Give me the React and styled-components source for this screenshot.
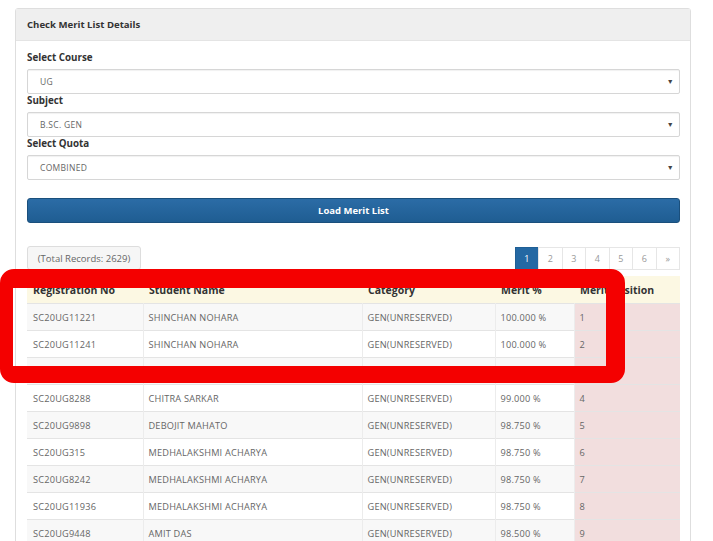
import React from 'react';
import styled, { createGlobalStyle } from 'styled-components';

const GlobalStyle = createGlobalStyle`
  html, body {
    margin: 0;
    padding: 0;
    background: #ffffff;
    overflow: hidden;
  }
  body {
    font-family: "Open Sans", "Noto Sans", sans-serif;
    color: #333;
  }
`;

const Page = styled.div`
  position: relative;
  height: 541px;
  overflow: hidden;
  padding: 8px 22px 0 15px;
`;

const Panel = styled.div`
  border: 1px solid #dedede;
  border-radius: 3px;
  background: #fff;
`;

const PanelHeading = styled.div`
  height: 31px;
  display: flex;
  align-items: center;
  padding: 0 11px;
  background: #efefef;
  border-bottom: 1px solid #e4e4e4;
  font-size: 9.6px;
  font-weight: 700;
  color: #333;
`;

const PanelBody = styled.div`
  padding: 10px 10px 0 11px;
`;

const Label = styled.div`
  font-size: 9.8px;
  font-weight: 700;
  line-height: 14px;
  margin-bottom: 4px;
  color: #333;
`;

const Select = styled.div`
  height: 25px;
  box-sizing: border-box;
  border: 1px solid #d6d6d6;
  border-radius: 2px;
  box-shadow: inset 0 1px 1px rgba(0, 0, 0, 0.06);
  display: flex;
  align-items: center;
  justify-content: space-between;
  padding: 0 5px 0 12px;
  font-size: 8.5px;
  letter-spacing: 0.3px;
  color: #666;
  text-transform: uppercase;
`;

const Caret = styled.span`
  font-size: 7px;
  color: #444;
`;

const LoadButton = styled.button`
  display: block;
  width: 100%;
  height: 25px;
  margin-top: 18px;
  border: 1px solid #1a4f7c;
  border-radius: 3px;
  background: linear-gradient(#2b6ca6, #1f5d92);
  color: #fff;
  font-family: inherit;
  font-size: 9.5px;
  font-weight: 700;
`;

const Toolbar = styled.div`
  margin-top: 23px;
  display: flex;
  justify-content: space-between;
  align-items: center;
`;

const TotalBox = styled.div`
  height: 24px;
  width: 114px;
  box-sizing: border-box;
  border: 1px solid #ddd;
  border-radius: 3px;
  background: #f6f6f6;
  display: flex;
  align-items: center;
  justify-content: center;
  font-size: 9.5px;
  color: #666;
`;

const Pager = styled.div`
  display: flex;
`;

const PageItem = styled.div`
  width: 24.5px;
  height: 23px;
  box-sizing: border-box;
  border: 1px solid ${({ $active }) => ($active ? '#1f5f95' : '#e6e6e6')};
  margin-left: -1px;
  background: ${({ $active }) => ($active ? '#2468a3' : '#fff')};
  color: ${({ $active }) => ($active ? '#fff' : '#999')};
  display: flex;
  align-items: center;
  justify-content: center;
  font-size: 9px;
`;

const Table = styled.table`
  margin-top: 6px;
  width: 653px;
  table-layout: fixed;
  border-collapse: collapse;
  font-size: 9.2px;
`;

const HeadCell = styled.th`
  height: 27px;
  padding: 0 6px;
  text-align: left;
  background: #fcf8e3;
  font-size: 10.5px;
  font-weight: 700;
  color: #333;
`;

const Row = styled.tr`
  background: ${({ $striped }) => ($striped ? '#f8f8f8' : '#fff')};
  border-top: 1px solid #e4e4e4;
`;

const Cell = styled.td`
  height: 26px;
  padding: 0 6px 0 5px;
  color: #666;
  text-transform: uppercase;
  letter-spacing: 0.2px;
  border-left: 1px solid #ececec;
  background: ${({ $danger }) => ($danger ? '#f2dede' : 'transparent')};
  &:first-child { border-left: none; padding-left: 6px; }
`;

const Marker = styled.div`
  position: absolute;
  left: 0;
  top: 269px;
  width: 625px;
  height: 114px;
  box-sizing: border-box;
  border-style: solid;
  border-color: #f40000;
  border-width: 19px 19px 17px 13px;
  border-radius: 14px;
  pointer-events: none;
`;

const rows = [
  ['SC20UG11221', 'SHINCHAN NOHARA', 'GEN(UNRESERVED)', '100.000 %', '1'],
  ['SC20UG11241', 'SHINCHAN NOHARA', 'GEN(UNRESERVED)', '100.000 %', '2'],
  ['SC20UG10562', 'PRIYANKA DAS', 'GEN(UNRESERVED)', '99.250 %', '3'],
  ['SC20UG8288', 'CHITRA SARKAR', 'GEN(UNRESERVED)', '99.000 %', '4'],
  ['SC20UG9898', 'DEBOJIT MAHATO', 'GEN(UNRESERVED)', '98.750 %', '5'],
  ['SC20UG315', 'MEDHALAKSHMI ACHARYA', 'GEN(UNRESERVED)', '98.750 %', '6'],
  ['SC20UG8242', 'MEDHALAKSHMI ACHARYA', 'GEN(UNRESERVED)', '98.750 %', '7'],
  ['SC20UG11936', 'MEDHALAKSHMI ACHARYA', 'GEN(UNRESERVED)', '98.750 %', '8'],
  ['SC20UG9448', 'AMIT DAS', 'GEN(UNRESERVED)', '98.500 %', '9'],
];

const selects = [
  ['Select Course', 'UG'],
  ['Subject', 'B.SC. GEN'],
  ['Select Quota', 'COMBINED'],
];

const App = () => {
  return (
    <Page>
      <GlobalStyle />
      <Panel>
        <PanelHeading>Check Merit List Details</PanelHeading>
        <PanelBody>
          {selects.map(([label, value]) => (
            <div key={label}>
              <Label>{label}</Label>
              <Select>
                {value}
                <Caret>▼</Caret>
              </Select>
            </div>
          ))}
          <LoadButton>Load Merit List</LoadButton>

          <Toolbar>
            <TotalBox>(Total Records: 2629)</TotalBox>
            <Pager>
              {['1', '2', '3', '4', '5', '6', '»'].map((p, i) => (
                <PageItem key={p} $active={i === 0}>{p}</PageItem>
              ))}
            </Pager>
          </Toolbar>

          <Table>
            <colgroup>
              <col style={{ width: 116 }} />
              <col style={{ width: 219 }} />
              <col style={{ width: 133 }} />
              <col style={{ width: 79 }} />
              <col style={{ width: 106 }} />
            </colgroup>
            <thead>
              <tr>
                <HeadCell>Registration No</HeadCell>
                <HeadCell>Student Name</HeadCell>
                <HeadCell>Category</HeadCell>
                <HeadCell>Merit %</HeadCell>
                <HeadCell>Merit Position</HeadCell>
              </tr>
            </thead>
            <tbody>
              {rows.map((r, i) => (
                <Row key={r[0]} $striped={i % 2 === 0}>
                  <Cell>{r[0]}</Cell>
                  <Cell>{r[1]}</Cell>
                  <Cell>{r[2]}</Cell>
                  <Cell>{r[3]}</Cell>
                  <Cell $danger>{r[4]}</Cell>
                </Row>
              ))}
            </tbody>
          </Table>
        </PanelBody>
      </Panel>
      <Marker />
    </Page>
  );
};

export default App;
